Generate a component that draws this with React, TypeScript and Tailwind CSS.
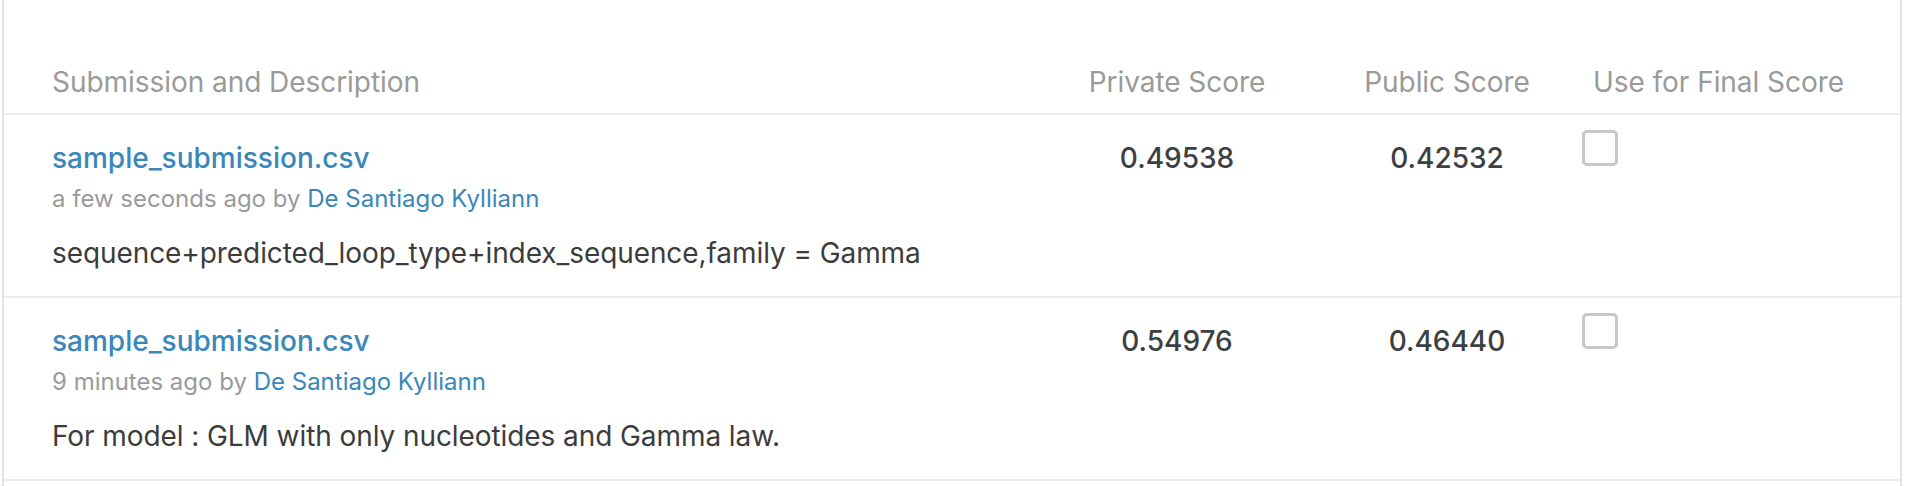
import React from "react";

type Row = {
  file: string;
  when: string;
  author: string;
  desc: string;
  priv: string;
  pub: string;
};

const rows: Row[] = [
  {
    file: "sample_submission.csv",
    when: "a few seconds ago by",
    author: "De Santiago Kylliann",
    desc: "sequence+predicted_loop_type+index_sequence,family = Gamma",
    priv: "0.49538",
    pub: "0.42532",
  },
  {
    file: "sample_submission.csv",
    when: "9 minutes ago by",
    author: "De Santiago Kylliann",
    desc: "For model : GLM with only nucleotides and Gamma law.",
    priv: "0.54976",
    pub: "0.46440",
  },
];

export default function App() {
  return (
    <div
      className="w-[1906px] h-[486px] bg-white overflow-hidden"
      style={{ fontFamily: "Inter, 'Noto Sans', sans-serif" }}
    >
      <div className="ml-[2px] w-[1900px] h-full border-l-2 border-r-2 border-[#e3e3e3]">
        <div className="grid grid-cols-[1fr_270px_270px_318px] pl-[48px] border-b-2 border-[#ededed] h-[115px]">
          <div className="pt-[64px] text-[28px] leading-[36px] tracking-[-0.05px] text-[#9a9a9a]">
            Submission and Description
          </div>
          <div className="pt-[64px] text-[28px] leading-[36px] tracking-[-0.05px] text-[#9a9a9a] text-center">
            Private Score
          </div>
          <div className="pt-[64px] text-[28px] leading-[36px] tracking-[-0.05px] text-[#9a9a9a] text-center">
            Public Score
          </div>
          <div className="pt-[64px] pl-[11px] text-[28px] leading-[36px] tracking-[-0.05px] text-[#9a9a9a]">
            Use for Final Score
          </div>
        </div>
        {rows.map((r, i) => (
          <div
            key={i}
            className="grid grid-cols-[1fr_270px_270px_318px] pl-[48px] border-b-2 border-[#ededed] h-[183px]"
          >
            <div className="flex flex-col pt-[25px]">
              <div className="text-[28px] leading-[36px] font-medium text-[#3a87b9]">
                {r.file}
              </div>
              <div className="mt-[7px] text-[24px] leading-[32px] text-[#9a9a9a]">
                {r.when} <span className="text-[#3a87b9]">{r.author}</span>
              </div>
              <div className="mt-[20px] text-[28px] leading-[36px] tracking-[-0.08px] text-[#3c3c3c]">
                {r.desc}
              </div>
            </div>
            <div className="pt-[25px] text-[28px] leading-[36px] font-medium text-[#3c4043] text-center">
              {r.priv}
            </div>
            <div className="pt-[25px] text-[28px] leading-[36px] font-medium text-[#3c4043] text-center">
              {r.pub}
            </div>
            <div className="pt-[15px]">
              <div className="w-[36px] h-[36px] rounded-[5px] border-[3px] border-[#c5c7ca] bg-white" />
            </div>
          </div>
        ))}
      </div>
    </div>
  );
}
